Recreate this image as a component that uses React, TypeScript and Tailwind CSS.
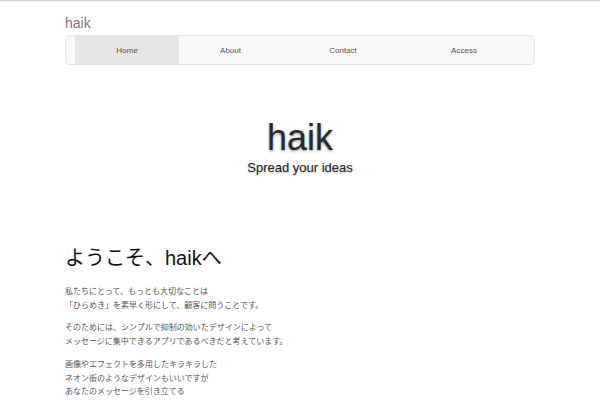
import React from "react";

const navItems = [
  { label: "Home", w: "w-[104px]", active: true },
  { label: "About", w: "w-[103px]", active: false },
  { label: "Contact", w: "w-[122px]", active: false },
  { label: "Access", w: "w-[120px]", active: false },
];

export default function App() {
  return (
    <div
      className="min-h-[400px] bg-white border-t border-[#cccccc]"
      style={{ fontFamily: '"Liberation Sans", Arial, "Noto Sans CJK JP", sans-serif' }}
    >
      <div className="w-[470px] mx-auto">
        <div className="pt-[12px] text-[14px] leading-[20px] text-[#777777]">haik</div>
        <nav className="mt-[2px] h-[30px] flex border border-[#e7e7e7] rounded-[4px] bg-[#f8f8f8] pl-[9px]">
          {navItems.map((it) => (
            <div
              key={it.label}
              className={
                it.w +
                " h-full flex items-center justify-center pt-[1px] text-[8px] text-[#555555] " +
                (it.active ? "bg-[#e5e5e5]" : "")
              }
            >
              {it.label}
            </div>
          ))}
        </nav>

        <div className="mt-[55px] flex flex-col items-center">
          <div className="text-[36px] leading-[36px] text-[#2a2a2a] [text-shadow:0_1px_3px_rgba(0,0,0,0.45)]">
            haik
          </div>
          <div className="mt-[4px] text-[13px] leading-[16px] text-[#222222] [text-shadow:0_1px_2px_rgba(0,0,0,0.3)]">
            Spread your ideas
          </div>
        </div>

        <h1 className="mt-[68px] text-[20px] leading-[28px] text-[#111111] font-normal">
          ようこそ、haikへ
        </h1>

        <div className="mt-[13px] text-[8px] leading-[13.5px] text-[#555555]">
          <p>
            私たちにとって、もっとも大切なことは
            <br />
            「ひらめき」を素早く形にして、顧客に問うことです。
          </p>
          <p className="mt-[9px]">
            そのためには、シンプルで抑制の効いたデザインによって
            <br />
            メッセージに集中できるアプリであるべきだと考えています。
          </p>
          <p className="mt-[10px]">
            画像やエフェクトを多用したキラキラした
            <br />
            ネオン街のようなデザインもいいですが
            <br />
            あなたのメッセージを引き立てる
            <br />
            シンプルなデザインを目指しています。
          </p>
        </div>
      </div>
    </div>
  );
}
